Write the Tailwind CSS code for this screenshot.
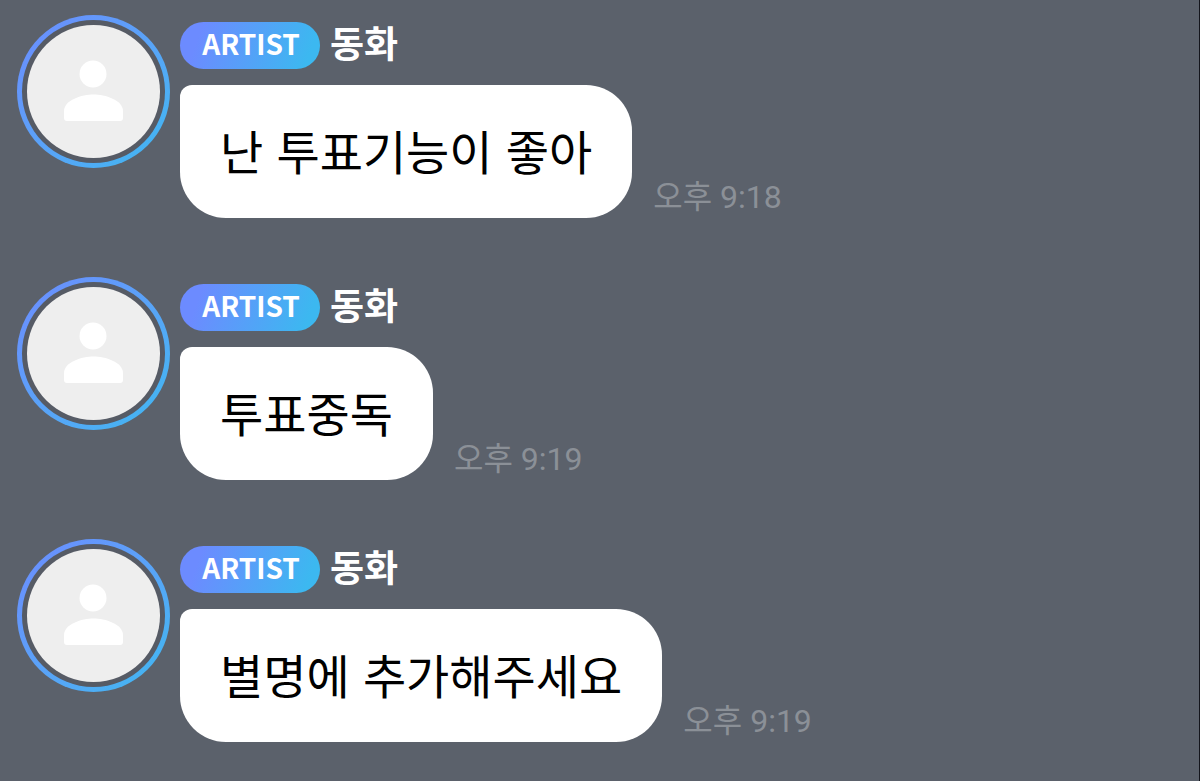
<!DOCTYPE html>
<html lang="ko">

<head>
    <meta charset="UTF-8">
    <meta name="viewport" content="width=device-width, initial-scale=1.0">
    <title>동화</title>
    <script src="https://cdn.jsdelivr.net/npm/@tailwindcss/browser@4"></script>
</head>

<body class="bg-[#5b616b] font-['Noto_Sans_CJK_KR',sans-serif]">
    <main class="min-h-screen border-r border-[#14151c] pt-[15px] pl-[17px]">
        <ul class="flex flex-col gap-[59px]">
            <li class="flex gap-[10px]">
                <div class="size-[153px] shrink-0 rounded-full bg-linear-to-br from-[#6c8bff] to-[#3cb8f0] p-[5px]">
                    <div class="size-full rounded-full bg-[#565b65] p-[5px]">
                        <svg class="size-full rounded-full bg-[#eeeeee]" viewBox="0 0 133 133" fill="#fff" aria-hidden="true">
                            <circle cx="66" cy="49" r="13.500" />
                            <path d="M37 86c0-11 18-16.500 29.500-16.500S96 75 96 86v7q0 3-3 3H40q-3 0-3-3z" />
                        </svg>
                    </div>
                </div>
                <div class="pt-[7px]">
                    <div class="flex h-[47px] items-start gap-[10px]">
                        <span class="flex h-full w-[140px] justify-center rounded-full bg-linear-[110deg] from-[#6c8bff] from-15% to-[#3cb8f0] to-90% pl-[2px] text-[28px] leading-[43px] font-bold text-white">ARTIST</span>
                        <h2 class="text-[37px] leading-[41px] font-bold text-white">동화</h2>
                    </div>
                    <div class="mt-[16px] flex items-end gap-[21px]">
                        <p class="rounded-[46px] rounded-tl-[12px] bg-white px-[40px] pt-[34px] pb-[38px] text-[47px] leading-[61px] text-black">난 투표기능이 좋아</p>
                        <time class="font-[Roboto,'Noto_Sans_CJK_KR',sans-serif] text-[32px] leading-[41px] text-[#8b9097]">오후 9:18</time>
                    </div>
                </div>
            </li>
            <li class="flex gap-[10px]">
                <div class="size-[153px] shrink-0 rounded-full bg-linear-to-br from-[#6c8bff] to-[#3cb8f0] p-[5px]">
                    <div class="size-full rounded-full bg-[#565b65] p-[5px]">
                        <svg class="size-full rounded-full bg-[#eeeeee]" viewBox="0 0 133 133" fill="#fff" aria-hidden="true">
                            <circle cx="66" cy="49" r="13.500" />
                            <path d="M37 86c0-11 18-16.500 29.500-16.500S96 75 96 86v7q0 3-3 3H40q-3 0-3-3z" />
                        </svg>
                    </div>
                </div>
                <div class="pt-[7px]">
                    <div class="flex h-[47px] items-start gap-[10px]">
                        <span class="flex h-full w-[140px] justify-center rounded-full bg-linear-[110deg] from-[#6c8bff] from-15% to-[#3cb8f0] to-90% pl-[2px] text-[28px] leading-[43px] font-bold text-white">ARTIST</span>
                        <h2 class="text-[37px] leading-[41px] font-bold text-white">동화</h2>
                    </div>
                    <div class="mt-[16px] flex items-end gap-[21px]">
                        <p class="rounded-[46px] rounded-tl-[12px] bg-white px-[40px] pt-[34px] pb-[38px] text-[47px] leading-[61px] text-black">투표중독</p>
                        <time class="font-[Roboto,'Noto_Sans_CJK_KR',sans-serif] text-[32px] leading-[41px] text-[#8b9097]">오후 9:19</time>
                    </div>
                </div>
            </li>
            <li class="flex gap-[10px]">
                <div class="size-[153px] shrink-0 rounded-full bg-linear-to-br from-[#6c8bff] to-[#3cb8f0] p-[5px]">
                    <div class="size-full rounded-full bg-[#565b65] p-[5px]">
                        <svg class="size-full rounded-full bg-[#eeeeee]" viewBox="0 0 133 133" fill="#fff" aria-hidden="true">
                            <circle cx="66" cy="49" r="13.500" />
                            <path d="M37 86c0-11 18-16.500 29.500-16.500S96 75 96 86v7q0 3-3 3H40q-3 0-3-3z" />
                        </svg>
                    </div>
                </div>
                <div class="pt-[7px]">
                    <div class="flex h-[47px] items-start gap-[10px]">
                        <span class="flex h-full w-[140px] justify-center rounded-full bg-linear-[110deg] from-[#6c8bff] from-15% to-[#3cb8f0] to-90% pl-[2px] text-[28px] leading-[43px] font-bold text-white">ARTIST</span>
                        <h2 class="text-[37px] leading-[41px] font-bold text-white">동화</h2>
                    </div>
                    <div class="mt-[16px] flex items-end gap-[21px]">
                        <p class="rounded-[46px] rounded-tl-[12px] bg-white px-[40px] pt-[34px] pb-[38px] text-[47px] leading-[61px] text-black">별명에 추가해주세요</p>
                        <time class="font-[Roboto,'Noto_Sans_CJK_KR',sans-serif] text-[32px] leading-[41px] text-[#8b9097]">오후 9:19</time>
                    </div>
                </div>
            </li>
        </ul>
    </main>
</body>

</html>
